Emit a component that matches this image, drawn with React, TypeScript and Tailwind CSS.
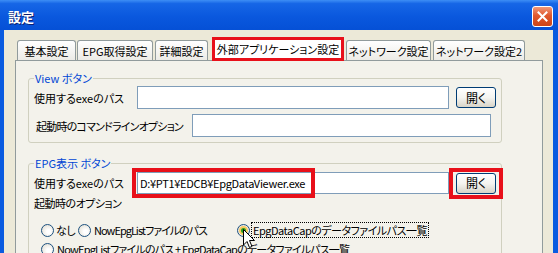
import React from 'react';

const tabs = [
  { label: '基本設定', cls: 'ml-[2px] w-[59px]' },
  { label: 'EPG取得設定', cls: 'ml-[1px] w-[76px]' },
  { label: '詳細設定', cls: 'ml-[2px] w-[53px]' },
];
const tabsRight = [
  { label: 'ネットワーク設定', cls: 'ml-[2px] w-[85px]' },
  { label: 'ネットワーク設定2', cls: 'ml-[2px] w-[92px]' },
];

function Tab({ label, cls }: { label: string; cls: string }) {
  return (
    <div
      className={`${cls} h-[20px] flex items-center justify-center border border-b-0 border-[#919B9C] rounded-t-[3px] bg-gradient-to-b from-white to-[#ECEBE6] whitespace-nowrap`}
    >
      {label}
    </div>
  );
}

function Radio({ checked }: { checked?: boolean }) {
  return (
    <span className="w-[13px] h-[13px] shrink-0 rounded-full border border-[#1C5180] bg-[radial-gradient(circle_at_60%_60%,#ffffff_20%,#dcd8ca_100%)] flex items-center justify-center">
      {checked && (
        <span className="w-[9px] h-[9px] rounded-full bg-[#f8c860] flex items-center justify-center">
          <span className="w-[5px] h-[5px] rounded-full bg-[#21a121]" />
        </span>
      )}
    </span>
  );
}

function OpenButton() {
  return (
    <button className="w-[40px] h-[21px] rounded-[3px] border border-[#003C74] bg-gradient-to-b from-white via-[#f4f4f0] to-[#d8d4c8] flex items-center justify-center text-[12px] leading-none">
      開く
    </button>
  );
}

export default function App() {
  return (
    <div className="w-[558px] h-[253px] overflow-hidden flex flex-col bg-[#0A5BE0] font-['Noto_Sans_CJK_JP',sans-serif] [font-feature-settings:'palt'] text-[11px] leading-[14px] text-black">
      {/* title bar */}
      <div className="h-[30px] shrink-0 flex items-center justify-between pl-[8px] pr-[5px] pt-[3px] bg-[linear-gradient(180deg,#3d8ef5_0%,#1666e6_12%,#0a58de_55%,#0550d6_100%)]">
        <span className="text-white font-bold text-[13px] [text-shadow:1px_1px_0_#0a1e70]">設定</span>
        <span className="w-[21px] h-[21px] rounded-[3px] border border-white bg-[linear-gradient(180deg,#f09878_0%,#e0582e_45%,#cc4418_100%)] flex items-center justify-center">
          <svg width="11" height="11" viewBox="0 0 11 11">
            <path d="M1.5 1.5 L9.5 9.5 M9.5 1.5 L1.5 9.5" stroke="white" strokeWidth="2" strokeLinecap="square" />
          </svg>
        </span>
      </div>

      <div className="flex-1 min-h-0 ml-[4px] mr-[5px] bg-[#ECE9D8] pl-[11px] pt-[7px]">
        {/* tabs */}
        <div className="h-[23px] flex items-end">
          {tabs.map((t) => (
            <Tab key={t.label} {...t} />
          ))}
          <div className="ml-[4px] w-[132px] h-[24px] -mb-px relative z-10 flex items-center justify-center border-[3px] border-[#e8101a] bg-white whitespace-nowrap">
            外部アプリケーション設定
          </div>
          {tabsRight.map((t) => (
            <Tab key={t.label} {...t} />
          ))}
        </div>

        {/* panel */}
        <div className="w-[528px] h-[260px] border border-[#919B9C] bg-[#F3F2EB] pl-[12px] pt-[10px]">
          <fieldset className="w-[474px] border border-[#D0D0BF] rounded-[3px] px-[5px] pb-[5px]">
            <legend className="px-[1px] text-[#0046D5]">View ボタン</legend>
            <div className="flex items-center h-[23px] mt-px">
              <span className="w-[103px] whitespace-nowrap">使用するexeのパス</span>
              <input readOnly className="w-[312px] h-[23px] border border-[#7F9DB9] bg-white" />
              <div className="ml-[7px]">
                <OpenButton />
              </div>
            </div>
            <div className="flex items-center h-[23px] mt-[5px]">
              <span className="w-[158px] pl-[2px] whitespace-nowrap tracking-[-0.8px]">起動時のコマンドラインオプション</span>
              <input readOnly className="w-[299px] h-[23px] border border-[#7F9DB9] bg-white" />
            </div>
          </fieldset>

          <fieldset className="w-[474px] mt-[13px] border border-[#D0D0BF] rounded-[3px] px-[5px] pb-[5px]">
            <legend className="px-[1px] text-[#0046D5]">EPG表示 ボタン</legend>
            <div className="flex items-center h-[22px] mt-[2px]">
              <span className="w-[103px] whitespace-nowrap">使用するexeのパス</span>
              <div className="relative">
                <input
                  readOnly
                  defaultValue="D:¥PT1¥EDCB¥EpgDataViewer.exe"
                  className="w-[312px] h-[22px] border border-[#7F9DB9] bg-white pl-[2px] outline-none tracking-[-0.3px]"
                />
                <div className="absolute left-[-5px] top-[-4px] w-[183px] h-[30px] border-[4px] border-[#e8101a]" />
              </div>
              <div className="ml-[7px] relative">
                <OpenButton />
                <div className="absolute left-[-7px] top-[-5px] w-[54px] h-[31px] border-[4px] border-[#e8101a]" />
              </div>
            </div>
            <div className="mt-[2px] tracking-[-0.5px]">起動時のオプション</div>
            <div className="flex items-center h-[16px] mt-[12px] whitespace-nowrap">
              <label className="w-[37px] ml-[7px] flex items-center gap-[2px]">
                <Radio />
                <span className="tracking-[-0.5px]">なし</span>
              </label>
              <label className="w-[159px] flex items-center gap-[3px]">
                <Radio />
                <span className="tracking-[-1px]">NowEpgListファイルのパス</span>
              </label>
              <label className="relative flex items-center gap-[1px]">
                <Radio checked />
                <span className="border border-dotted border-black px-[1px] h-[16px] flex items-center tracking-[-0.5px]">
                  EpgDataCapのデータファイルパス一覧
                </span>
                <svg className="absolute left-[6px] top-[7px]" width="13" height="21" viewBox="0 0 13 21">
                  <path d="M0.5 0.5 L0.5 16 L4 12.5 L6.5 18.5 L9 17.5 L6.5 11.5 L11.5 11.5 Z" fill="white" stroke="black" strokeWidth="1" strokeLinejoin="miter" />
                </svg>
              </label>
            </div>
            <div className="flex items-center h-[16px] mt-[3px] whitespace-nowrap">
              <label className="ml-[7px] flex items-center gap-[3px]">
                <Radio />
                <span className="tracking-[-0.8px]">NowEpgListファイルのパス + EpgDataCapのデータファイルパス一覧</span>
              </label>
            </div>
          </fieldset>
        </div>
      </div>
    </div>
  );
}
